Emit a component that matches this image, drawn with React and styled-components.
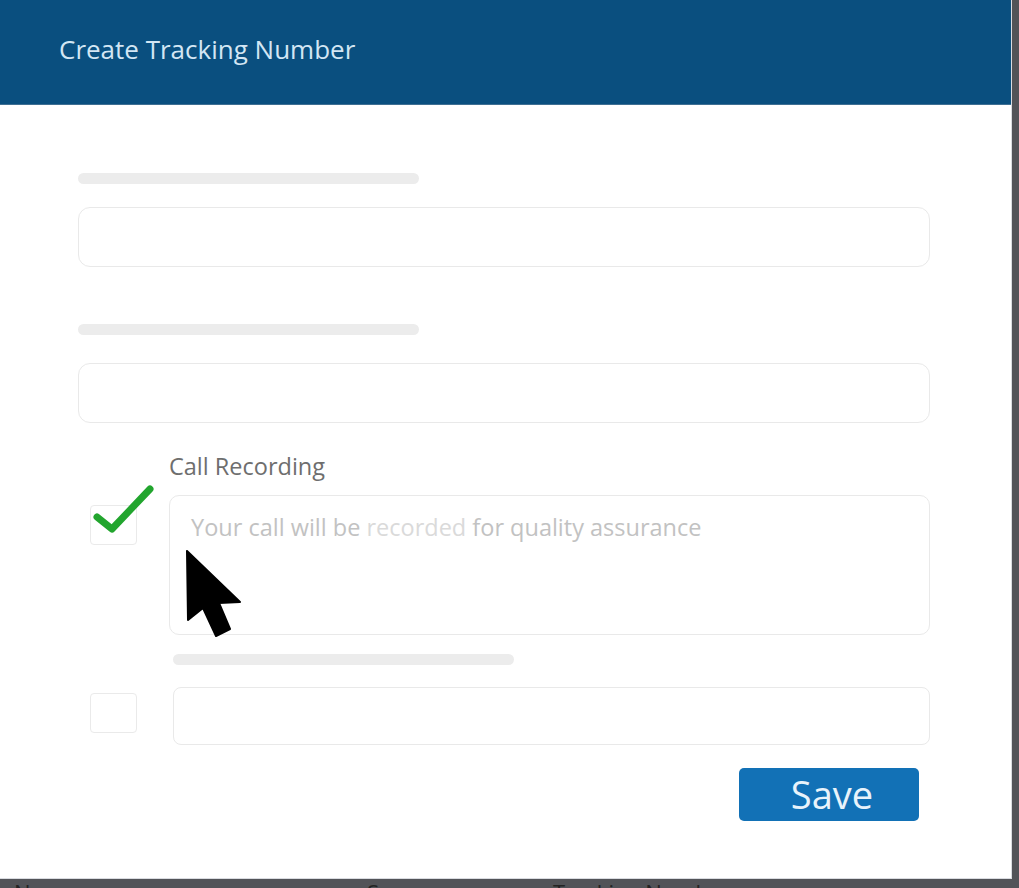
import React from "react";
import styled, { createGlobalStyle } from "styled-components";

const GlobalStyle = createGlobalStyle`
  html, body {
    margin: 0;
    padding: 0;
    background: #525358;
    font-family: "Open Sans", "Lato", sans-serif;
    overflow: hidden;
  }
`;

// modal
const Modal = styled.div`
  width: 1012px;
  height: 879px;
  background: #ffffff;
  border-right: 1px solid #d9dbe0;
  border-bottom: 1px solid #d9dbe0;
  box-sizing: border-box;
  display: flex;
  flex-direction: column;
`;

const Header = styled.div`
  height: 105px;
  background: #0a4f7f;
  padding: 31px 0 0 59px;
  box-sizing: border-box;
  border-bottom: 1px solid #3f6f93;
`;

const Title = styled.h1`
  margin: 0;
  font-size: 26px;
  font-weight: 400;
  line-height: 36px;
  color: #d3e6f4;
`;

const Body = styled.div`
  padding: 68px 81px 0 78px;
  display: flex;
  flex-direction: column;
`;

const SkeletonBar = styled.div`
  width: ${(p) => p.$width}px;
  height: 11px;
  margin-top: ${(p) => p.$mt || 0}px;
  margin-left: ${(p) => p.$ml || 0}px;
  border-radius: 6px;
  background: #ececec;
`;

const Field = styled.div`
  height: ${(p) => p.$height}px;
  margin-top: ${(p) => p.$mt || 0}px;
  border: 1.5px solid #e9e9e9;
  border-radius: ${(p) => p.$radius || 12}px;
  box-sizing: border-box;
  position: relative;
  flex: ${(p) => (p.$grow ? "1 1 auto" : "none")};
`;

const OptionRow = styled.div`
  display: flex;
  align-items: flex-start;
  margin-top: ${(p) => p.$mt || 0}px;
`;

const CheckCol = styled.div`
  width: ${(p) => p.$width}px;
  padding-left: 12px;
  padding-top: ${(p) => p.$pt || 0}px;
  box-sizing: border-box;
  flex-shrink: 0;
`;

const Checkbox = styled.div`
  width: 47px;
  height: 40px;
  border: 1.5px solid #eaeaea;
  border-radius: 4px;
  box-sizing: border-box;
  position: relative;
`;

const CheckMark = styled.svg`
  position: absolute;
  left: -1px;
  top: -22px;
  overflow: visible;
`;

const FieldCol = styled.div`
  flex: 1;
  display: flex;
  flex-direction: column;
`;

const Label = styled.div`
  font-size: 23.5px;
  color: #6e6e6e;
  line-height: 30px;
  margin-bottom: 14px;
`;

const Placeholder = styled.div`
  padding: 16px 0 0 21px;
  font-size: 23.5px;
  line-height: 30px;
  color: #c2c2c2;
`;

const Faint = styled.span`
  color: #dadada;
`;

const Cursor = styled.svg`
  position: absolute;
  left: 16px;
  top: 54px;
`;

const Footer = styled.div`
  display: flex;
  justify-content: flex-end;
  padding-right: 11px;
  margin-top: 23px;
`;

const SaveButton = styled.button`
  width: 180px;
  height: 53px;
  border: none;
  border-radius: 5px;
  background: #1271b6;
  color: #e8f3fb;
  font-family: "Open Sans", "Lato", sans-serif;
  font-size: 38px;
  line-height: 53px;
  padding: 0 0 0 6px;
`;

// page behind the modal
const TableHead = styled.div`
  display: flex;
  font-size: 22px;
  line-height: 1;
  color: #232323;
  padding-top: 2px;
`;

const HeadCell = styled.div`
  width: ${(p) => p.$width}px;
  padding-left: ${(p) => p.$pl || 0}px;
  box-sizing: border-box;
`;

const App = () => {
  return (
    <>
      <GlobalStyle />
      <Modal>
        <Header>
          <Title>Create Tracking Number</Title>
        </Header>
        <Body>
          <SkeletonBar $width={341} />
          <Field $height={60} $mt={23} />
          <SkeletonBar $width={341} $mt={57} />
          <Field $height={60} $mt={28} />

          <OptionRow $mt={28}>
            <CheckCol $width={91} $pt={54}>
              <Checkbox>
                <CheckMark width="66" height="52" viewBox="0 0 66 52">
                  <polyline
                    points="7,33 22,45 60,5"
                    fill="none"
                    stroke="#22a52e"
                    strokeWidth="7"
                    strokeLinecap="round"
                    strokeLinejoin="round"
                  />
                </CheckMark>
              </Checkbox>
            </CheckCol>
            <FieldCol>
              <Label>Call Recording</Label>
              <Field $height={140} $radius={10}>
                <Placeholder>
                  Your call will be <Faint>recorded</Faint> for quality assurance
                </Placeholder>
                <Cursor width="56" height="88" viewBox="0 0 56 88">
                  <polygon
                    points="1,1 2,70 17,58 30,86 44,79 33,53 54,52"
                    fill="#000"
                    stroke="#000"
                    strokeWidth="2"
                    strokeLinejoin="round"
                  />
                </Cursor>
              </Field>
              <SkeletonBar $width={341} $mt={19} $ml={4} />
            </FieldCol>
          </OptionRow>

          <OptionRow $mt={22}>
            <CheckCol $width={95} $pt={6}>
              <Checkbox />
            </CheckCol>
            <Field $height={58} $radius={8} $grow />
          </OptionRow>

          <Footer>
            <SaveButton>Save</SaveButton>
          </Footer>
        </Body>
      </Modal>
      <TableHead>
        <HeadCell $width={367} $pl={14}>Name</HeadCell>
        <HeadCell $width={186}>Source</HeadCell>
        <HeadCell $width={300}>Tracking Number</HeadCell>
      </TableHead>
    </>
  );
};

export default App;
